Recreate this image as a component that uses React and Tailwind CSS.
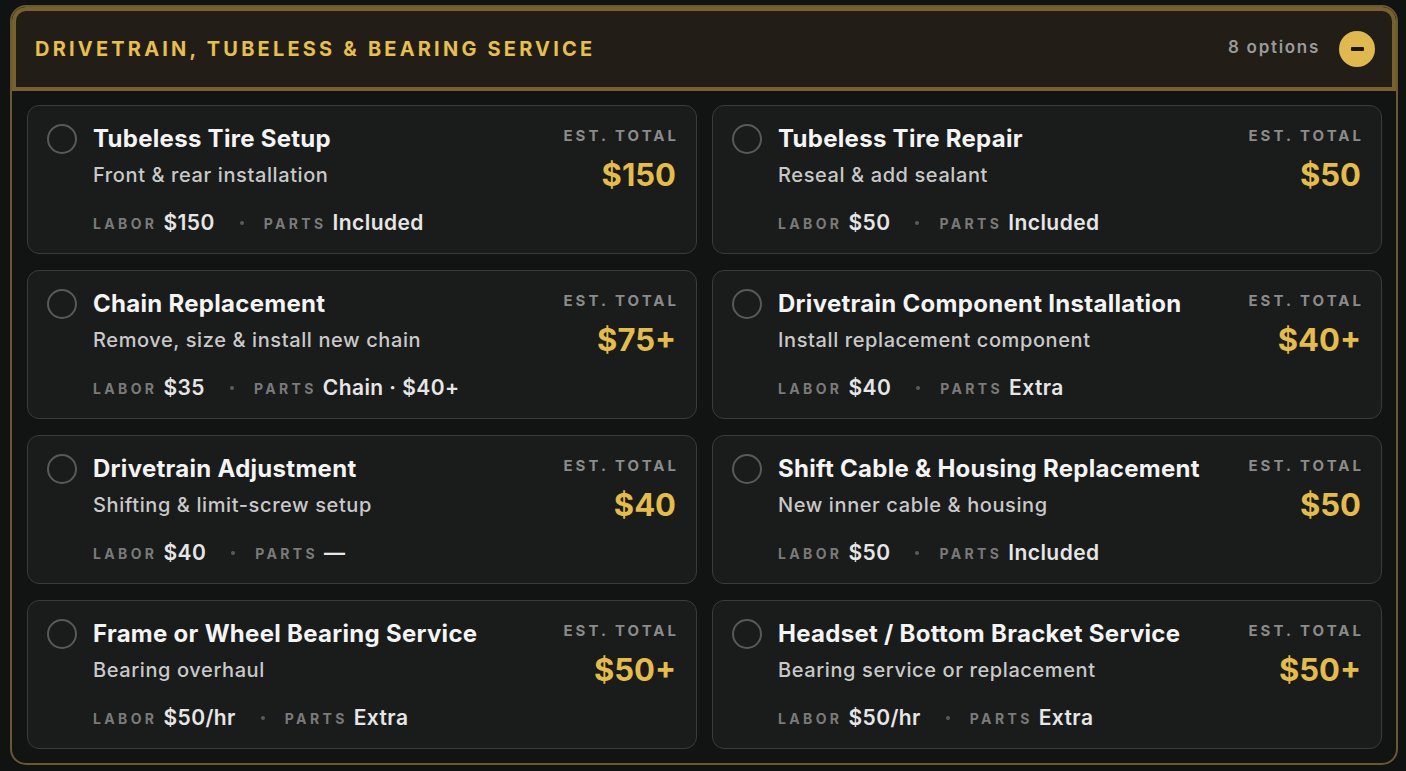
import React from "react";

const items = [
  { t: "Tubeless Tire Setup", s: "Front & rear installation", p: "$150", l: "$150", pa: "Included" },
  { t: "Tubeless Tire Repair", s: "Reseal & add sealant", p: "$50", l: "$50", pa: "Included" },
  { t: "Chain Replacement", s: "Remove, size & install new chain", p: "$75+", l: "$35", pa: "Chain · $40+" },
  { t: "Drivetrain Component Installation", s: "Install replacement component", p: "$40+", l: "$40", pa: "Extra" },
  { t: "Drivetrain Adjustment", s: "Shifting & limit-screw setup", p: "$40", l: "$40", pa: "—" },
  { t: "Shift Cable & Housing Replacement", s: "New inner cable & housing", p: "$50", l: "$50", pa: "Included" },
  { t: "Frame or Wheel Bearing Service", s: "Bearing overhaul", p: "$50+", l: "$50/hr", pa: "Extra" },
  { t: "Headset / Bottom Bracket Service", s: "Bearing service or replacement", p: "$50+", l: "$50/hr", pa: "Extra" },
];

function Card({ it }) {
  return (
    <div className="h-[149px] rounded-[12px] border border-[#3a3b3b] bg-[#1a1b1b] flex justify-between pl-[19px] pr-[20px]">
      <div className="flex items-start gap-[16px] pt-[18px]">
        <div className="w-[30px] h-[30px] rounded-full border-2 border-[#595959] shrink-0" />
        <div className="flex flex-col">
          <div className="text-[24px] leading-[30px] font-bold tracking-[0.012em] text-[#f4f4f4]">{it.t}</div>
          <div className="text-[20px] leading-[26px] font-medium tracking-[0.03em] text-[#c9c9c9] mt-[8px]">{it.s}</div>
          <div className="flex items-center mt-[22px] h-[26px]">
            <span className="text-[14px] font-bold tracking-[0.24em] text-[#7a7a7a]">LABOR</span>
            <span className="ml-[6px] text-[21px] font-semibold tracking-[0.02em] text-[#e6e6e6]">{it.l}</span>
            <span className="ml-[25px] mr-[20px] w-[4px] h-[4px] rounded-full bg-[#5a5a5a]" />
            <span className="text-[14px] font-bold tracking-[0.24em] text-[#7a7a7a]">PARTS</span>
            <span className="ml-[6px] text-[21px] font-semibold tracking-[0.02em] text-[#e6e6e6]">{it.pa}</span>
          </div>
        </div>
      </div>
      <div className="flex flex-col items-end pt-[21px]">
        <div className="text-[15px] leading-[18px] font-bold tracking-[0.2em] mr-[-0.2em] text-[#8b8b8b]">EST. TOTAL</div>
        <div className="text-[31px] leading-[36px] font-bold text-[#e3bc4d] mt-[12px]">{it.p}</div>
      </div>
    </div>
  );
}

export default function App() {
  return (
    <div className="min-h-screen bg-[#111212] pt-[5px] px-[10px]" style={{ fontFamily: "Inter, 'Noto Sans', sans-serif" }}>
      <div className="w-[1388px] rounded-[16px] border-2 border-[#6b5730] bg-[#121313] overflow-hidden">
        <div className="h-[84px] rounded-t-[14px] border-4 border-[#77612f] bg-[#221e17] flex items-center justify-between pl-[19px] pr-[17px]">
          <div className="text-[20px] font-bold tracking-[0.16em] text-[#e5bf4f]">DRIVETRAIN, TUBELESS &amp; BEARING SERVICE</div>
          <div className="flex items-center gap-[19px]">
            <span className="text-[17px] font-semibold tracking-[0.1em] text-[#9a9a9a] mt-[-3px]">8 options</span>
            <div className="w-[36px] h-[36px] rounded-full bg-[#dfb94f] flex items-center justify-center">
              <div className="w-[13px] h-[4px] rounded-[1px] bg-[#1a1710]" />
            </div>
          </div>
        </div>
        <div className="grid grid-cols-2 gap-x-[15px] gap-y-[16px] pl-[15px] pr-[14px] pt-[14px] pb-[14px]">
          {items.map((it, i) => (
            <Card key={i} it={it} />
          ))}
        </div>
      </div>
    </div>
  );
}
